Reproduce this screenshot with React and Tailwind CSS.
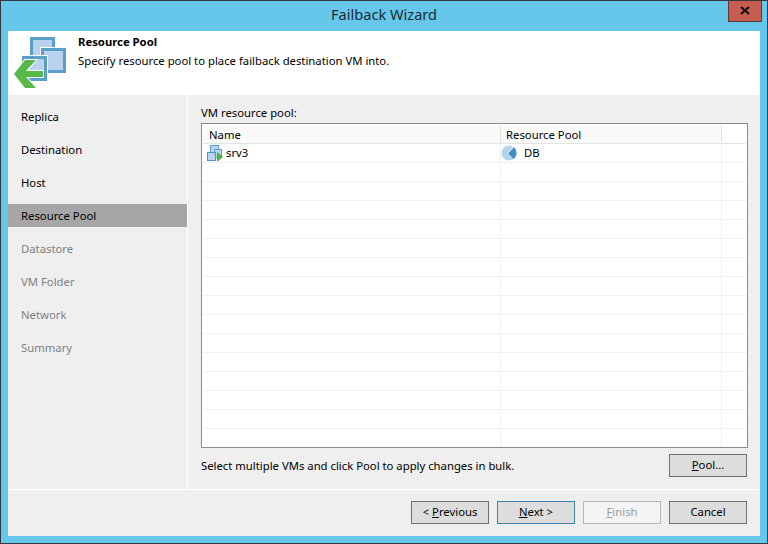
const steps = [
  { name: "Replica" },
  { name: "Destination" },
  { name: "Host" },
  { name: "Resource Pool", active: true },
  { name: "Datastore", disabled: true },
  { name: "VM Folder", disabled: true },
  { name: "Network", disabled: true },
  { name: "Summary", disabled: true },
];

const emptyRows = Array.from({ length: 15 }, (_, i) => i);

function WizardIcon() {
  const arrow = "M0 40 L11 26 L22 26 L12 37 L29 37 L29 43 L12 43 L22 54 L11 54 Z";
  return (
    <svg width="66" height="64" viewBox="0 0 66 64">
      <g shapeRendering="crispEdges">
        <rect x="17.5" y="4.5" width="22" height="24" fill="#b9d3ee" stroke="#5a9fc9" strokeWidth="3" />
        <rect x="26" y="13" width="26" height="26" fill="#fff" />
        <rect x="28.5" y="15.5" width="22" height="22" fill="#b9d3ee" stroke="#5a9fc9" strokeWidth="3" />
        <rect x="7" y="21" width="27" height="27" fill="#fff" />
        <rect x="9.5" y="23.5" width="22" height="22" fill="#b9d3ee" stroke="#5a9fc9" strokeWidth="3" />
      </g>
      <path d={arrow} fill="#fff" stroke="#fff" strokeWidth="2" />
      <path d={arrow} fill="#57b947" />
    </svg>
  );
}

function VmIcon() {
  return (
    <svg width="16" height="17" viewBox="0 0 16 17" className="shrink-0">
      <g shapeRendering="crispEdges">
        <rect x="3.5" y="0.5" width="8" height="8" fill="#b9d3ee" stroke="#5a9fc9" />
        <rect x="7.5" y="4.5" width="7" height="8" fill="#b9d3ee" stroke="#5a9fc9" />
        <rect x="0.5" y="7.5" width="8" height="8" fill="#b9d3ee" stroke="#4b93c4" />
      </g>
      <path d="M10 7 L16 12 L10 17 Z" fill="#4fb33f" />
    </svg>
  );
}

function PoolIcon() {
  return (
    <svg width="16" height="16" viewBox="0 0 16 16" className="shrink-0">
      <circle cx="8" cy="8" r="7.5" fill="#b5d2ec" />
      <path d="M7 8 L12.5 2 A7.5 7.5 0 0 1 12.5 14 Z" fill="#3f8fc6" />
      <path d="M7 8 L12.5 2" stroke="#fff" strokeWidth="1" />
    </svg>
  );
}

function Button({ children, variant }) {
  const styles = {
    normal: "border-[#707070] bg-[#dddddd] text-black",
    focus: "border-[#3c7fb1] bg-[#dddddd] text-black",
    disabled: "border-[#b5b5b5] bg-[#f4f4f4] text-[#9c9c9c]",
  };
  return (
    <button className={`w-[78px] h-[23px] border flex items-center justify-center text-[11.3px] ${styles[variant || "normal"]}`}>
      <span>{children}</span>
    </button>
  );
}

export default function App() {
  return (
    <div className="w-[768px] h-[544px] bg-[#65c8ea] border border-[#33383d] flex flex-col font-['Noto_Sans',sans-serif] text-[11.3px] text-black overflow-hidden relative">
      <div className="h-[30px] pb-[2px] flex items-center justify-center text-[14.6px] text-[#1c2b33] shrink-0">Failback Wizard</div>
      <div className="absolute right-[5px] top-[-1px] w-[34px] h-[22px] bg-[#c75c50] border border-[#5a3a38] border-t-0 flex items-center justify-center">
        <svg width="10" height="9" viewBox="0 0 10 9">
          <path d="M1 1 L9 8 M9 1 L1 8" stroke="#111" strokeWidth="2.2" />
        </svg>
      </div>

      <div className="mx-[7px] flex-1 flex flex-col min-h-0">
        <div className="h-[64px] bg-white flex shrink-0 relative">
          <div className="w-[70px] pl-[6px] pt-[3px] shrink-0">
            <WizardIcon />
          </div>
          <div className="pt-[3px]">
            <div className="font-bold leading-[16px]">Resource Pool</div>
            <div className="leading-[16px] mt-[3px]">Specify resource pool to place failback destination VM into.</div>
          </div>
        </div>

        <div className="flex-1 bg-[#efefef] flex flex-col min-h-0">
          <div className="h-[395px] flex border-b border-white shrink-0">
            <div className="w-[179px] pt-[10px] flex flex-col gap-[10px] shrink-0">
              {steps.map((s) => (
                <div
                  key={s.name}
                  className={`h-[23px] pl-[13px] pt-px flex items-center ${s.active ? "bg-[#a6a6a6]" : ""} ${s.disabled ? "text-[#7f7f7f]" : ""}`}
                >
                  {s.name}
                </div>
              ))}
            </div>
            <div className="w-px bg-white shrink-0" />
            <div className="flex-1 px-[13px] pr-[12px] flex flex-col min-w-0">
              <div className="h-[28px] pt-[10px] leading-[16px]">VM resource pool:</div>
              <div className="h-[325px] bg-white border border-[#8a8a92] overflow-hidden pl-px pr-px pt-px shrink-0">
                <div className="h-[19px] flex border-b border-[#e4e4e4]">
                  <div className="w-[298px] pl-[6px] leading-[19px] bg-[#fafafa] border-r border-[#e4e4e4]">Name</div>
                  <div className="w-[221px] pl-[5px] leading-[19px] bg-[#fafafa] border-r border-[#e4e4e4]">Resource Pool</div>
                  <div className="flex-1" />
                </div>
                <div className="h-[19px] flex border-b border-[#f0f0f0]">
                  <div className="w-[298px] pl-[4px] flex items-center gap-[3px] border-r border-[#f0f0f0]">
                    <VmIcon />
                    <span className="pt-px">srv3</span>
                  </div>
                  <div className="w-[221px] flex items-center gap-[7px] border-r border-[#f0f0f0]">
                    <PoolIcon />
                    <span className="pt-px">DB</span>
                  </div>
                  <div className="flex-1" />
                </div>
                {emptyRows.map((r) => (
                  <div key={r} className="h-[19px] flex border-b border-[#f0f0f0]">
                    <div className="w-[298px] border-r border-[#f0f0f0]" />
                    <div className="w-[221px] border-r border-[#f0f0f0]" />
                    <div className="flex-1" />
                  </div>
                ))}
              </div>
              <div className="flex items-center justify-between mt-[6px] pr-px">
                <span className="pt-px">Select multiple VMs and click Pool to apply changes in bulk.</span>
                <Button><span className="underline">P</span>ool...</Button>
              </div>
            </div>
          </div>
          <div className="flex-1 flex justify-end items-start gap-[8px] pt-[11px] pr-[13px]">
            <Button>&lt; <span className="underline">P</span>revious</Button>
            <Button variant="focus"><span className="underline">N</span>ext &gt;</Button>
            <Button variant="disabled"><span className="underline">F</span>inish</Button>
            <Button>Cancel</Button>
          </div>
        </div>
      </div>
      <div className="h-[7px] shrink-0" />
    </div>
  );
}
